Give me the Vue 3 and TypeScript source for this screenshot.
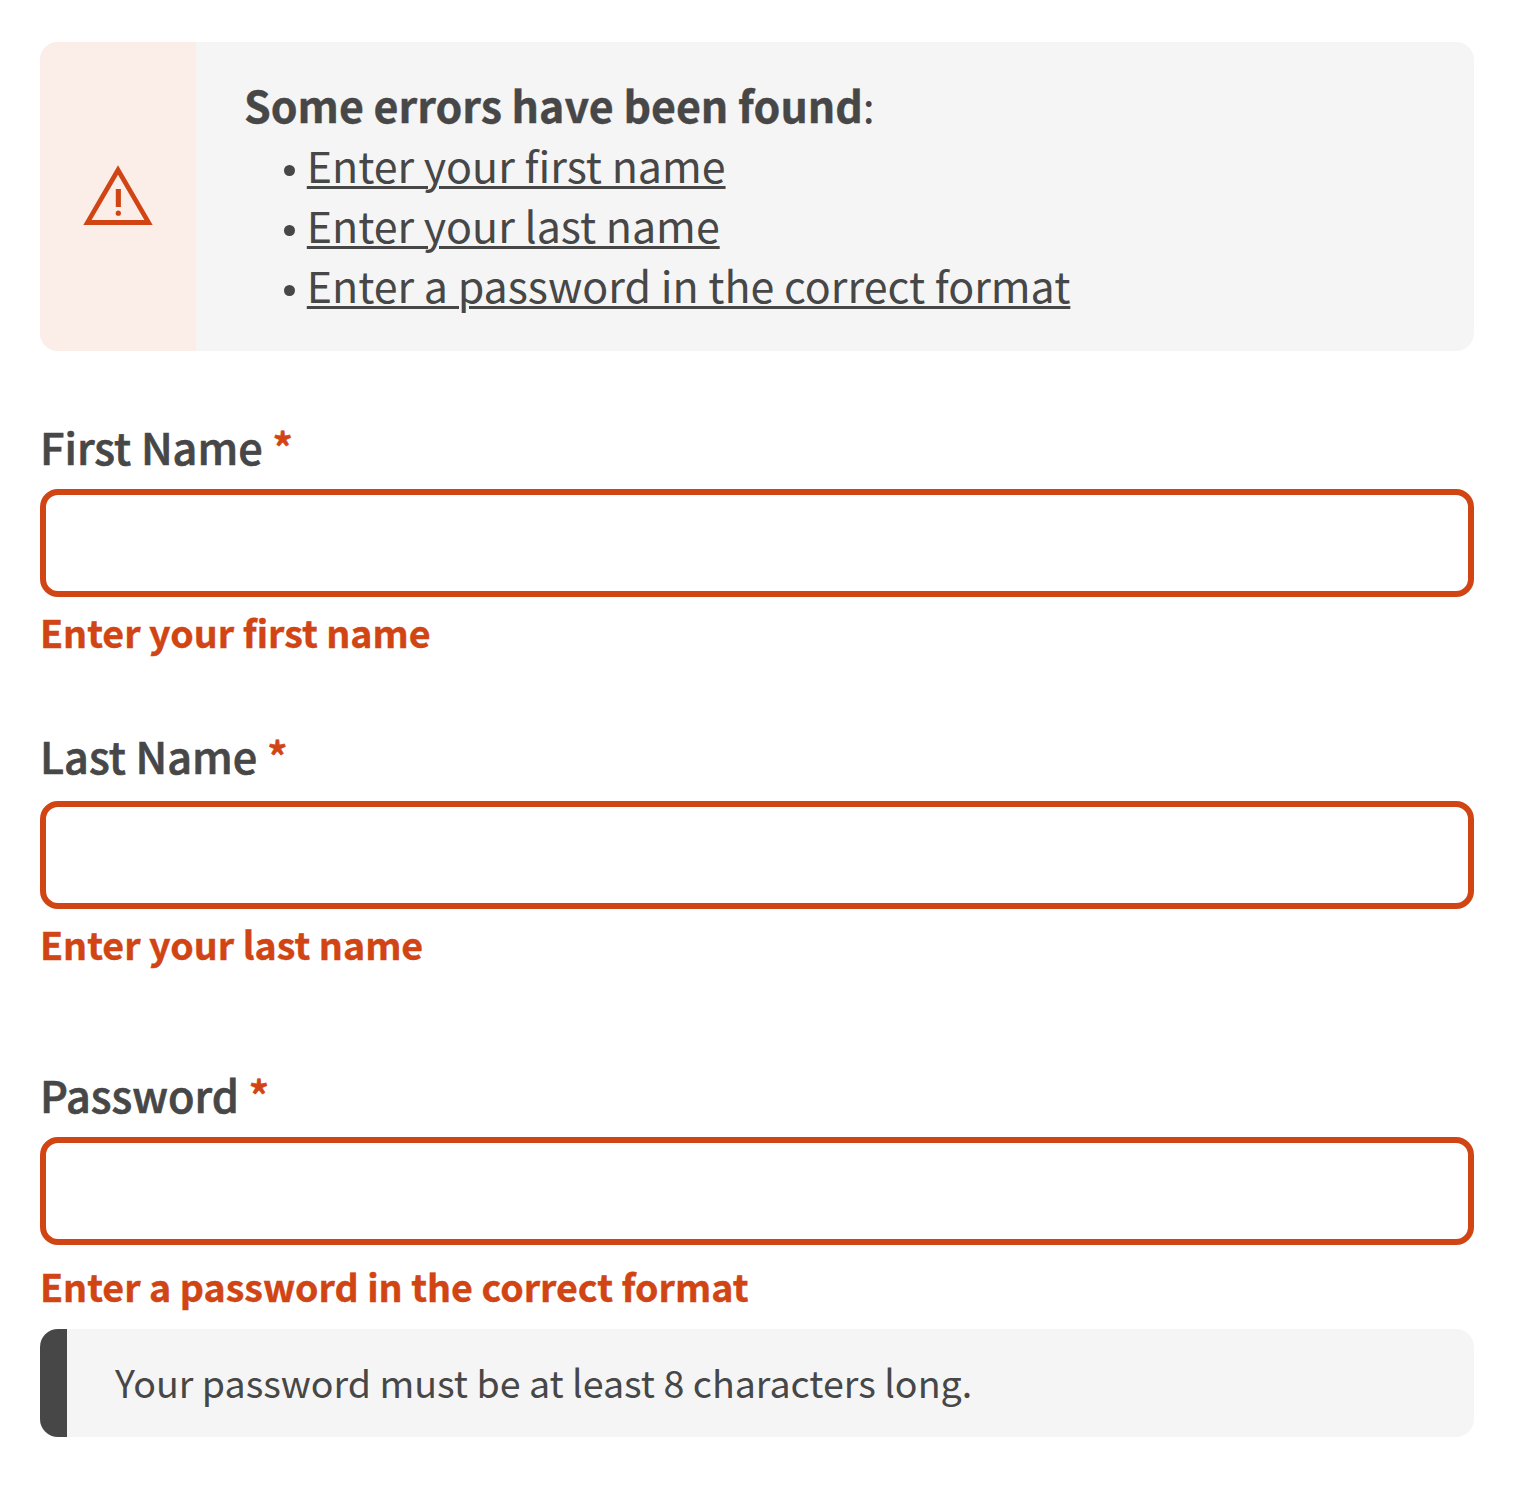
<script setup lang="ts">
interface Field {
  id: string
  label: string
  error: string
  hint?: string
}

const fields: Field[] = [
  { id: 'first-name', label: 'First Name', error: 'Enter your first name' },
  { id: 'last-name', label: 'Last Name', error: 'Enter your last name' },
  {
    id: 'password',
    label: 'Password',
    error: 'Enter a password in the correct format',
    hint: 'Your password must be at least 8 characters long.',
  },
]
</script>

<template>
  <main class="page">
    <section class="summary">
      <div class="summary-icon">
        <svg width="70" height="60" viewBox="0 0 70 60" fill="#d14414">
          <path fill-rule="evenodd" d="M35 0.2 L69.7 60 H0.3 Z M35 9.8 L61.4 55 H8.6 Z" />
          <path d="M32.8 24h5.1v18h-5.1z" />
          <circle cx="35.3" cy="48.2" r="2.6" />
        </svg>
      </div>
      <div class="summary-body">
        <p class="summary-title"><strong>Some errors have been found</strong>:</p>
        <ul class="summary-list">
          <li v-for="f in fields" :key="f.id">
            <span class="bullet"></span><a :href="'#' + f.id">{{ f.error }}</a>
          </li>
        </ul>
      </div>
    </section>

    <div v-for="f in fields" :key="f.id" class="field" :class="f.id">
      <label :for="f.id">{{ f.label }} <span class="star">*</span></label>
      <input :id="f.id" class="box" />
      <p class="error">{{ f.error }}</p>
      <p v-if="f.hint" class="hint">{{ f.hint }}</p>
    </div>
  </main>
</template>

<style>
body {
  background: #fff;
}
</style>

<style scoped>
.page {
  box-sizing: border-box;
  width: 1524px;
  height: 1492px;
  padding: 42px 50px 0 40px;
  font-family: 'Noto Sans CJK SC', 'Noto Sans', sans-serif;
  color: #474747;
  overflow: hidden;
}
p,
ul {
  margin: 0;
  padding: 0;
}
.summary {
  display: flex;
  height: 309px;
  border-radius: 18px;
  overflow: hidden;
  background: #f5f5f5;
}
.summary-icon {
  width: 156px;
  padding-top: 123px;
  box-sizing: border-box;
  display: flex;
  justify-content: center;
  background: #fbede8;
}
.summary-icon svg {
  display: block;
}
.summary-body {
  padding: 32px 0 0 48px;
  font-size: 42.95px;
  line-height: 60px;
  white-space: nowrap;
}
.summary-title strong {
  font-size: 42.9px;
  -webkit-text-stroke: 0.4px currentColor;
}
.summary-list {
  list-style: none;
}
.summary-list li {
  display: flex;
  align-items: center;
  padding-left: 40px;
}
.bullet {
  width: 11.4px;
  height: 11.6px;
  margin: 13px 11.4px 0 0;
  border-radius: 50%;
  background: #474747;
}
.summary-list a {
  color: inherit;
  text-decoration: underline;
  text-decoration-thickness: 3px;
  text-underline-offset: 3px;
}
.field {
  display: flex;
  flex-direction: column;
}
label {
  height: 60px;
  line-height: 60px;
  font-size: 43.2px;
  font-weight: 500;
  -webkit-text-stroke: 0.7px currentColor;
}
.star {
  color: #d14414;
}
.first-name {
  margin-top: 65px;
}
.last-name {
  margin-top: 63px;
}
.password {
  margin-top: 90px;
}
.box {
  box-sizing: border-box;
  width: 1434px;
  height: 108px;
  margin-top: 13px;
  border: 6px solid #d14414;
  border-radius: 18px;
  background: #fff;
  outline: none;
}
.last-name .box {
  margin-top: 16px;
}
.error {
  height: 60px;
  line-height: 60px;
  margin-top: 5px;
  font-size: 37.6px;
  font-weight: 700;
  color: #d14414;
  -webkit-text-stroke: 0.4px currentColor;
}
.password .error {
  margin-top: 11px;
}
.hint {
  box-sizing: border-box;
  height: 108px;
  line-height: 106px;
  margin-top: 13px;
  padding-left: 48px;
  border-left: 27px solid #474747;
  border-radius: 18px;
  background: #f5f5f5;
  font-size: 37.6px;
}
</style>
